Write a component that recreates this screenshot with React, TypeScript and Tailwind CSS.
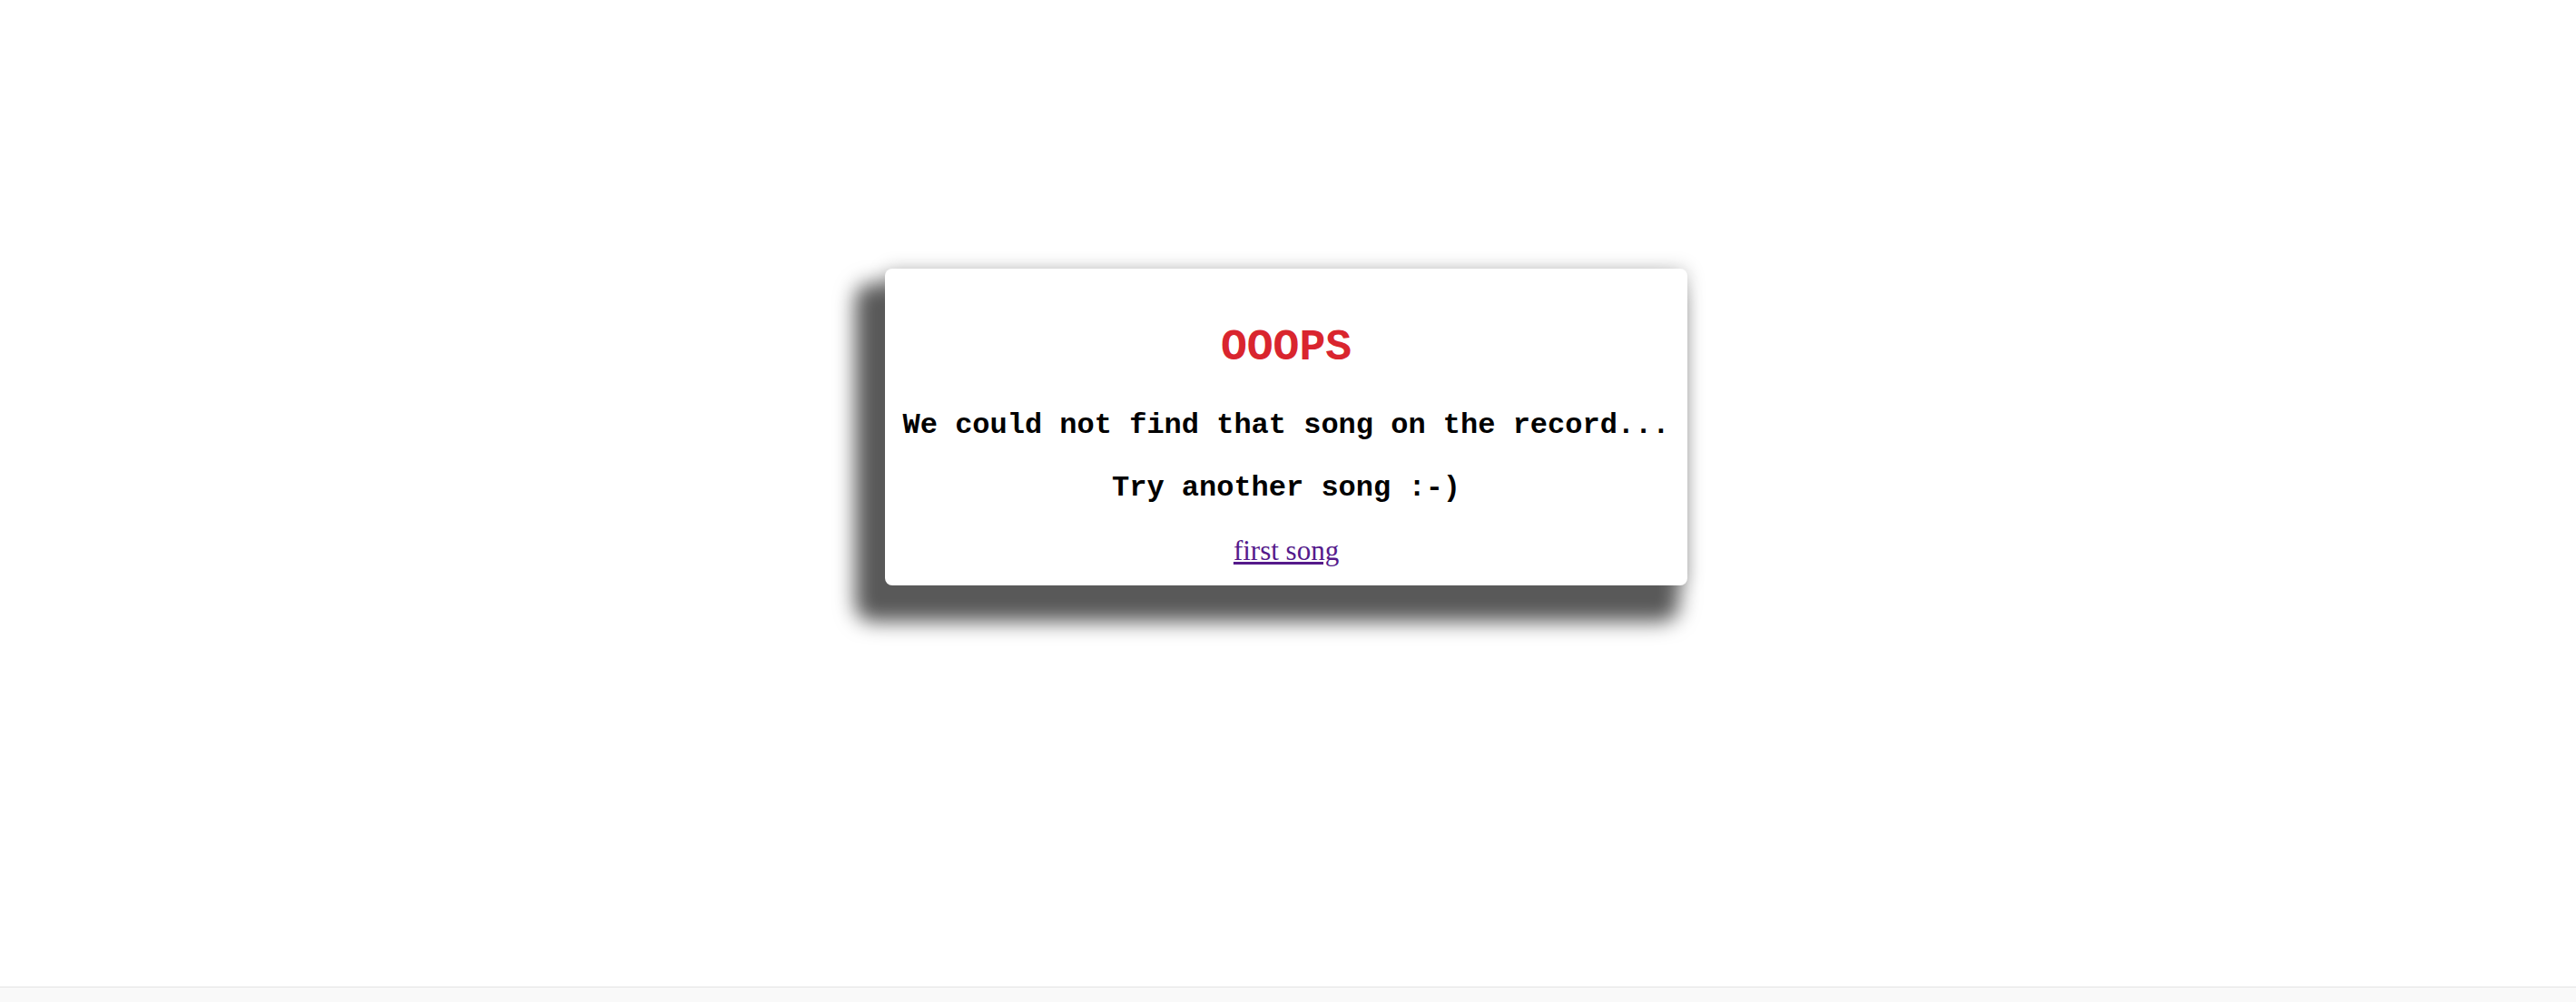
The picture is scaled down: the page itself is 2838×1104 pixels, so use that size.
import React from 'react';

const NotFound: React.FC = () => {
    return (
        <div className="min-h-[1104px] flex flex-col bg-white">
            <main className="flex-1 flex justify-center pt-[296px]">
                {/* Card */}
                <div className="w-[884px] h-[349px] mr-[4px] bg-white rounded-lg text-center pt-[60px] shadow-[-21px_28px_22px_12px_#595959,0_0_20px_rgba(0,0,0,0.22)]">
                    <h1 className="font-['Liberation_Mono','Courier_New',monospace] font-bold text-[48px] leading-[54px] text-[#d9252e]">
                        OOOPS
                    </h1>
                    <p className="mt-[41px] font-['Liberation_Mono','Courier_New',monospace] font-bold text-[32px] leading-[36px] text-black">
                        We could not find that song on the record...
                    </p>
                    <p className="mt-[33px] font-['Liberation_Mono','Courier_New',monospace] font-bold text-[32px] leading-[36px] text-black">
                        Try another song :-)
                    </p>
                    <div className="mt-[33px] font-['Liberation_Serif','Times_New_Roman',serif] text-[31px] leading-[36px]">
                        <a href="#" className="text-[#551a8b] underline">
                            first song
                        </a>
                    </div>
                </div>
            </main>
            <div className="h-[17px] border-t border-[#e3e3e3] bg-[#f9f9f9]" />
        </div>
    );
};

export default NotFound;
